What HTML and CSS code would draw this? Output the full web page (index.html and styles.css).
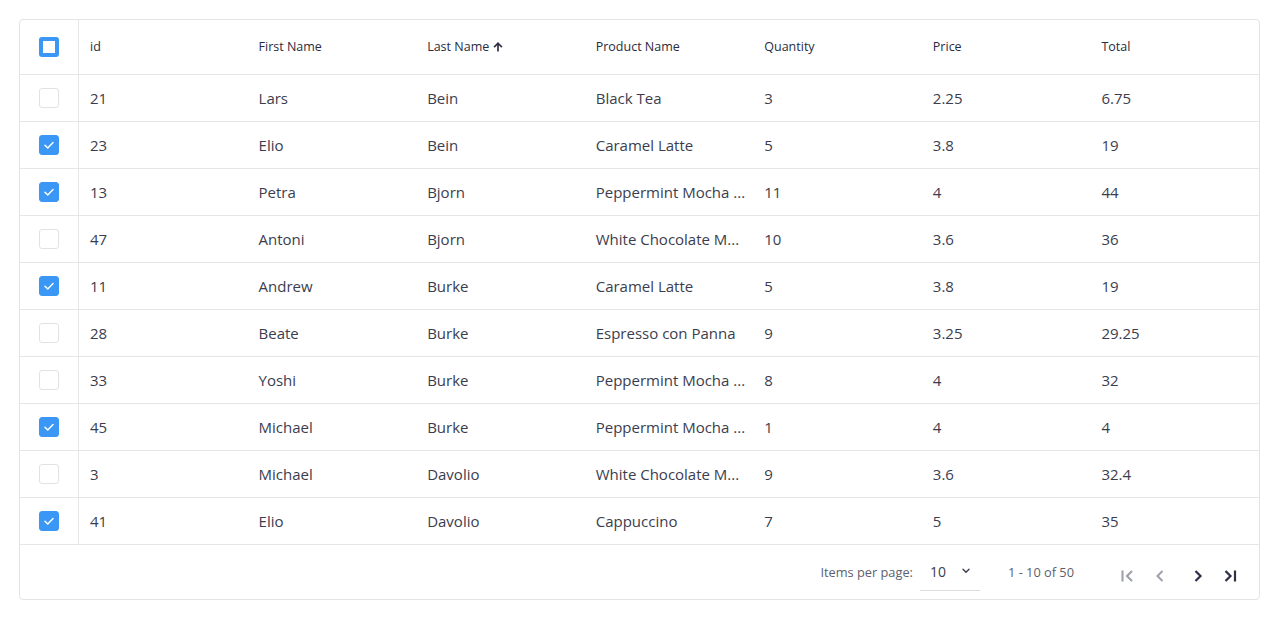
FILE: index.html
```html
<!DOCTYPE html>
<html>
<head>
<meta charset="utf-8">
<link rel="stylesheet" href="styles.css">
</head>
<body>
<div class="grid-card">
  <div class="row head">
    <div class="cell sel"><span class="cb indet"></span></div>
    <div class="cell">id</div>
    <div class="cell">First Name</div>
    <div class="cell">Last Name <svg class="sort" width="10" height="11" viewBox="0 0 10 11"><path d="M5 1 L9.5 5.6 L8.3 6.7 L5.85 4.25 V10.5 H4.15 V4.25 L1.7 6.7 L0.5 5.6 Z" fill="#2f3142"/></svg></div>
    <div class="cell">Product Name</div>
    <div class="cell">Quantity</div>
    <div class="cell">Price</div>
    <div class="cell">Total</div>
  </div>
  <div class="row"><div class="cell sel"><span class="cb"></span></div><div class="cell">21</div><div class="cell">Lars</div><div class="cell">Bein</div><div class="cell">Black Tea</div><div class="cell">3</div><div class="cell">2.25</div><div class="cell">6.75</div></div>
  <div class="row"><div class="cell sel"><span class="cb on"><svg viewBox="0 0 20 20"><path d="M5.5 10.2 L8.6 13.2 L14.5 7.2" fill="none" stroke="#fff" stroke-width="1.6" stroke-linecap="round" stroke-linejoin="round"/></svg></span></div><div class="cell">23</div><div class="cell">Elio</div><div class="cell">Bein</div><div class="cell">Caramel Latte</div><div class="cell">5</div><div class="cell">3.8</div><div class="cell">19</div></div>
  <div class="row"><div class="cell sel"><span class="cb on"><svg viewBox="0 0 20 20"><path d="M5.5 10.2 L8.6 13.2 L14.5 7.2" fill="none" stroke="#fff" stroke-width="1.6" stroke-linecap="round" stroke-linejoin="round"/></svg></span></div><div class="cell">13</div><div class="cell">Petra</div><div class="cell">Bjorn</div><div class="cell" title="Peppermint Mocha Frappuccino">Peppermint Mocha ...</div><div class="cell">11</div><div class="cell">4</div><div class="cell">44</div></div>
  <div class="row"><div class="cell sel"><span class="cb"></span></div><div class="cell">47</div><div class="cell">Antoni</div><div class="cell">Bjorn</div><div class="cell" title="White Chocolate Mocha">White Chocolate M...</div><div class="cell">10</div><div class="cell">3.6</div><div class="cell">36</div></div>
  <div class="row"><div class="cell sel"><span class="cb on"><svg viewBox="0 0 20 20"><path d="M5.5 10.2 L8.6 13.2 L14.5 7.2" fill="none" stroke="#fff" stroke-width="1.6" stroke-linecap="round" stroke-linejoin="round"/></svg></span></div><div class="cell">11</div><div class="cell">Andrew</div><div class="cell">Burke</div><div class="cell">Caramel Latte</div><div class="cell">5</div><div class="cell">3.8</div><div class="cell">19</div></div>
  <div class="row"><div class="cell sel"><span class="cb"></span></div><div class="cell">28</div><div class="cell">Beate</div><div class="cell">Burke</div><div class="cell">Espresso con Panna</div><div class="cell">9</div><div class="cell">3.25</div><div class="cell">29.25</div></div>
  <div class="row"><div class="cell sel"><span class="cb"></span></div><div class="cell">33</div><div class="cell">Yoshi</div><div class="cell">Burke</div><div class="cell" title="Peppermint Mocha Frappuccino">Peppermint Mocha ...</div><div class="cell">8</div><div class="cell">4</div><div class="cell">32</div></div>
  <div class="row"><div class="cell sel"><span class="cb on"><svg viewBox="0 0 20 20"><path d="M5.5 10.2 L8.6 13.2 L14.5 7.2" fill="none" stroke="#fff" stroke-width="1.6" stroke-linecap="round" stroke-linejoin="round"/></svg></span></div><div class="cell">45</div><div class="cell">Michael</div><div class="cell">Burke</div><div class="cell" title="Peppermint Mocha Frappuccino">Peppermint Mocha ...</div><div class="cell">1</div><div class="cell">4</div><div class="cell">4</div></div>
  <div class="row"><div class="cell sel"><span class="cb"></span></div><div class="cell">3</div><div class="cell">Michael</div><div class="cell">Davolio</div><div class="cell" title="White Chocolate Mocha">White Chocolate M...</div><div class="cell">9</div><div class="cell">3.6</div><div class="cell">32.4</div></div>
  <div class="row"><div class="cell sel"><span class="cb on"><svg viewBox="0 0 20 20"><path d="M5.5 10.2 L8.6 13.2 L14.5 7.2" fill="none" stroke="#fff" stroke-width="1.6" stroke-linecap="round" stroke-linejoin="round"/></svg></span></div><div class="cell">41</div><div class="cell">Elio</div><div class="cell">Davolio</div><div class="cell">Cappuccino</div><div class="cell">7</div><div class="cell">5</div><div class="cell">35</div></div>
  <div class="pager">
    <span class="label">Items per page:</span>
    <div class="select"><span>10</span><svg width="10" height="6" viewBox="0 0 10 6"><path d="M2 1.2 L5 4.2 L8 1.2" fill="none" stroke="#3a3c4c" stroke-width="1.4" stroke-linecap="round" stroke-linejoin="round"/></svg></div>
    <span class="range">1 - 10 of 50</span>
    <div class="nav">
      <button class="btn dis"><svg width="18" height="18" viewBox="0 0 18 18"><path d="M3.5 3.5 V14.5" stroke="currentColor" stroke-width="2" fill="none"/><path d="M13 4 L8 9 L13 14" stroke="currentColor" stroke-width="2" fill="none"/></svg></button>
      <button class="btn dis"><svg width="18" height="18" viewBox="0 0 18 18"><path d="M11.5 4 L6.5 9 L11.5 14" stroke="currentColor" stroke-width="2" fill="none"/></svg></button>
      <button class="btn"><svg width="18" height="18" viewBox="0 0 18 18"><path d="M6.5 4 L11.5 9 L6.5 14" stroke="currentColor" stroke-width="2.2" fill="none"/></svg></button>
      <button class="btn"><svg width="18" height="18" viewBox="0 0 18 18"><path d="M4.5 4 L9.5 9 L4.5 14" stroke="currentColor" stroke-width="2.2" fill="none"/><path d="M14 3.5 V14.5" stroke="currentColor" stroke-width="2.2" fill="none"/></svg></button>
    </div>
  </div>
</div>
</body>
</html>
```
FILE: styles.css
```css
html, body {
  margin: 0;
  padding: 0;
  background: #ffffff;
}
body {
  padding: 19px 20px 19px 19px;
  font-family: "Open Sans", "Noto Sans", sans-serif;
  color: #3b3d4e;
}
.grid-card {
  border: 1px solid #e4e4e7;
  border-radius: 4px;
  overflow: hidden;
}
.row {
  display: grid;
  grid-template-columns: 59px repeat(7, 1fr);
  height: 46px;
  border-bottom: 1px solid #e6e6e8;
}
.row.head {
  height: 54px;
}
.cell {
  display: block;
  line-height: 46px;
  padding: 0 11px;
  font-size: 15px;
  white-space: nowrap;
  overflow: hidden;
  min-width: 0;
}
.head .cell {
  line-height: 54px;
  font-size: 12.5px;
  font-weight: 500;
  color: #2a2c3d;
}
.cell.sel {
  padding: 0;
  display: flex;
  align-items: center;
  justify-content: center;
  border-right: 1px solid #e6e6e8;
}
.sort {
  margin-left: 1px;
  vertical-align: -1px;
}
.cb {
  width: 20px;
  height: 20px;
  box-sizing: border-box;
  border: 1px solid #e2e2e5;
  border-radius: 3px;
  display: flex;
  align-items: center;
  justify-content: center;
  background: #fff;
}
.cb.on {
  background: #3a97f5;
  border-color: #3a97f5;
}
.cb.on svg {
  width: 20px;
  height: 20px;
}
.cb.indet {
  background: #fff;
  border: 4px solid #3a97f5;
  border-radius: 3px;
}
.pager {
  height: 54px;
  display: flex;
  align-items: center;
  justify-content: flex-end;
  padding-right: 20px;
  font-size: 12.8px;
  color: #5d5f6e;
}
.label {
  margin-right: 7px;
}
.select {
  width: 60px;
  height: 38px;
  box-sizing: border-box;
  display: flex;
  align-items: center;
  justify-content: space-between;
  padding: 0 9px 0 10px;
  border-bottom: 1px solid #dcdcdf;
  font-size: 14px;
  color: #3b3d4e;
}
.select span {
  margin-top: -1px;
}
.select svg {
  margin-top: -2px;
}
.range {
  margin-left: 28px;
  margin-right: 45px;
}
.nav {
  display: flex;
  gap: 14px;
  align-items: center;
  margin-top: 8px;
}
.btn {
  width: 18px;
  height: 18px;
  padding: 0;
  border: 0;
  background: none;
  color: #2e3046;
  display: flex;
}
.btn.dis {
  color: #9c9ea8;
}
.btn:nth-child(2) {
  margin-right: 6px;
}
```
